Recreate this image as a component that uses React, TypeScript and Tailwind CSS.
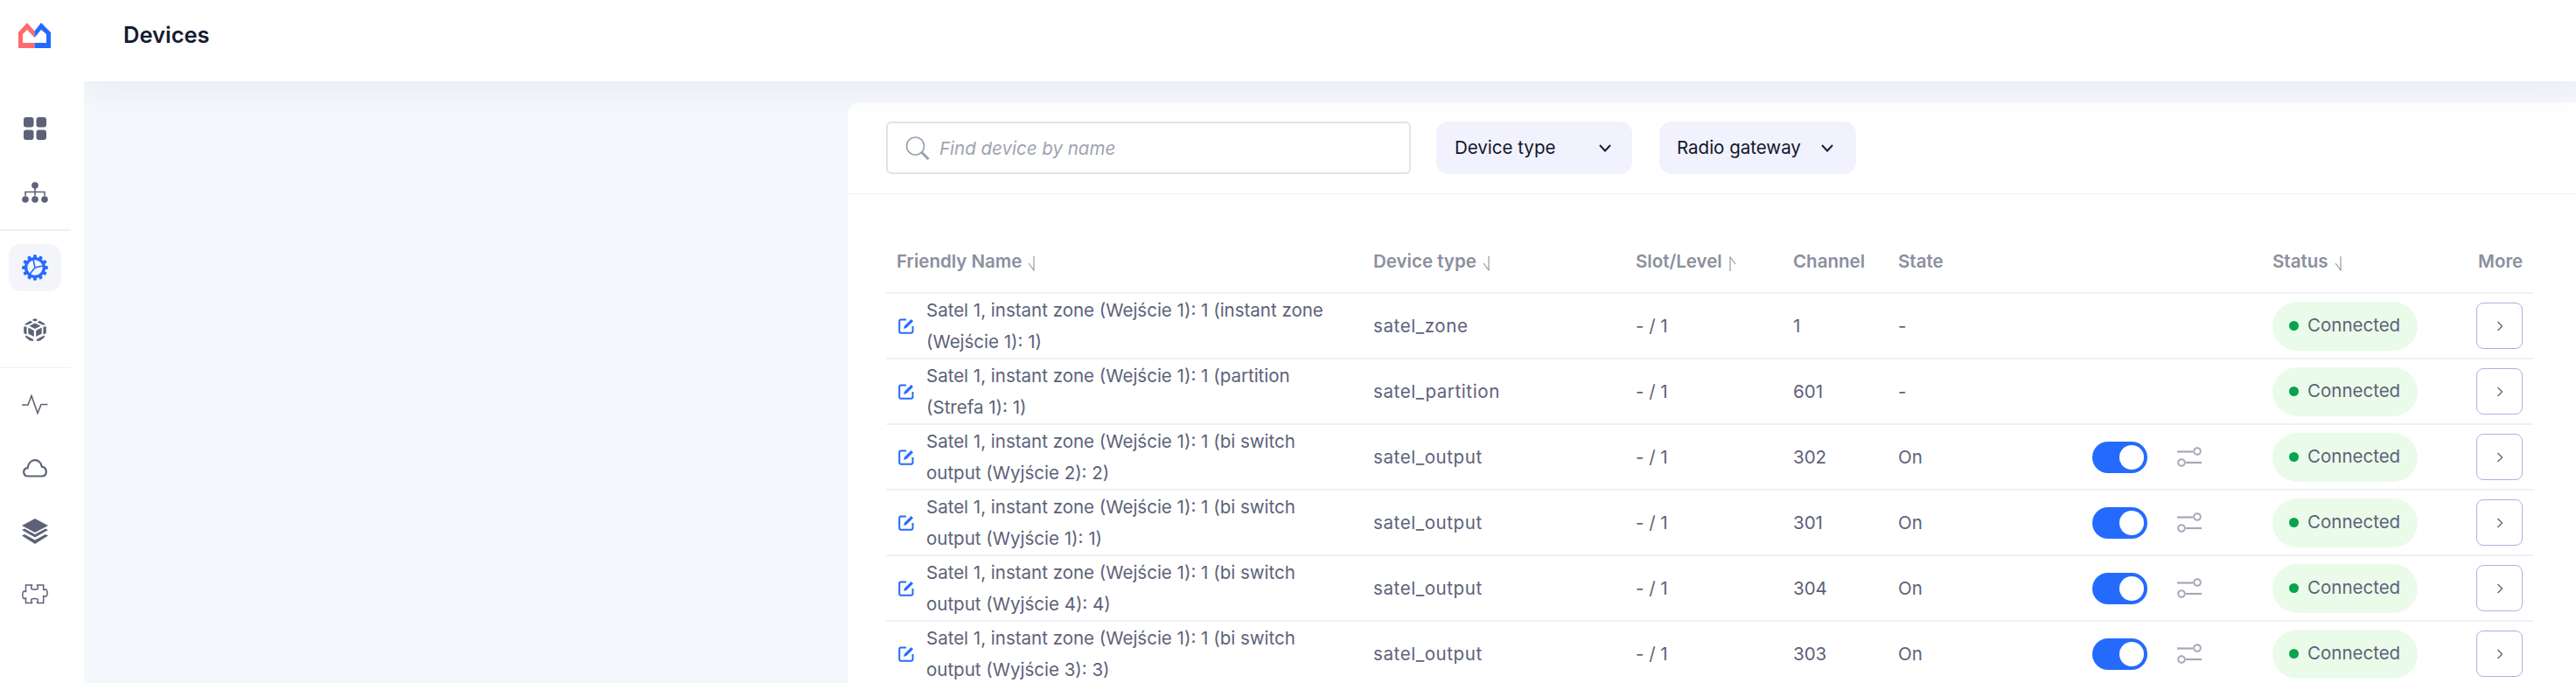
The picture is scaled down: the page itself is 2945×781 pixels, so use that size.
import React from "react";

const ink = "#5d6279";
const rowGrid = "grid grid-cols-[557px_300px_180px_120px_222px_206px_233px_64px] items-center";

function Logo() {
  return (
    <svg width="37" height="29" viewBox="0 0 37 29">
      <path d="M18.5 9.5 L10 0 L0 11 V29 H18.5 V23 H5 V13 L10 8 L18.5 17 Z" fill="#ff6b6b" />
      <path d="M18.5 9.5 L26 0 L37 11 V29 H18.5 V23 H32 V13 L26 8 L18.5 17 Z" fill="#246bfd" />
    </svg>
  );
}
function GridIcon() {
  return (
    <svg width="26" height="26" viewBox="0 0 26 26" fill={ink}>
      <rect x="0" y="0" width="11.5" height="11.5" rx="3" />
      <rect x="14.5" y="0" width="11.5" height="11.5" rx="3" />
      <rect x="0" y="14.5" width="11.5" height="11.5" rx="3" />
      <rect x="14.5" y="14.5" width="11.5" height="11.5" rx="3" />
    </svg>
  );
}
function TreeIcon() {
  return (
    <svg width="30" height="24" viewBox="0 0 30 24" fill={ink}>
      <circle cx="15" cy="4" r="3.8" />
      <circle cx="4" cy="20" r="3.8" />
      <circle cx="15" cy="20" r="3.8" />
      <circle cx="26" cy="20" r="3.8" />
      <path d="M14.2 7h1.6v3.7h11v5h-1.6v-3.4h-9.4v3.4h-1.6v-3.4H4.8v3.4H3.2v-5h11z" />
    </svg>
  );
}
function GearIcon() {
  const teeth = Array.from({ length: 12 }, (_, i) => i * 30);
  return (
    <svg width="30" height="30" viewBox="0 0 30 30">
      {teeth.map((a) => (
        <rect key={a} x="13.1" y="0.2" width="3.8" height="4.5" rx="1" fill="#246bfd" transform={`rotate(${a} 15 15)`} />
      ))}
      <circle cx="15" cy="15" r="10.4" fill="none" stroke="#246bfd" strokeWidth="3.4" />
      <path d="M13 6 L15 15 L24 13 M15 15 L9 22.5" fill="none" stroke="#246bfd" strokeWidth="1.6" />
    </svg>
  );
}
function CubeIcon() {
  return (
    <svg width="28" height="28" viewBox="0 0 28 28" fill={ink}>
      <path d="M14 6.5 L20.5 9.8 L14 13 L7.5 9.8Z" />
      <path d="M10.6 3 L14 1 L17.4 3 L14 4.6Z" />
      <path d="M19.5 3.8 L25.5 7.4 L25.5 8.6 L22.6 8.6 L16.5 5.4Z" />
      <path d="M8.5 3.8 L2.5 7.4 L2.5 8.6 L5.4 8.6 L11.5 5.4Z" />
      <path d="M6.3 11.5 L12.8 14.9 L12.8 22 L6.3 18.6Z" />
      <path d="M21.7 11.5 L15.2 14.9 L15.2 22 L21.7 18.6Z" />
      <path d="M1.2 10.5 L4.5 10.5 L4.5 19.5 L1.2 18Z" />
      <path d="M26.8 10.5 L23.5 10.5 L23.5 19.5 L26.8 18Z" />
      <path d="M3.5 20.6 L12 25 L12 27 L8 26.5 L3 22.5Z" />
      <path d="M24.5 20.6 L16 25 L16 27 L20 26.5 L25 22.5Z" />
    </svg>
  );
}
function PulseIcon() {
  return (
    <svg width="30" height="24" viewBox="0 0 30 24" fill="none" stroke={ink} strokeWidth="1.6" strokeLinejoin="miter">
      <path d="M0 12 H7 L11 1.5 L18 21.5 L22 11.5 H29.5" />
    </svg>
  );
}
function CloudIcon() {
  return (
    <svg width="28" height="21" viewBox="0 0 28 21" fill="none" stroke={ink} strokeWidth="2.2">
      <path d="M6 19.5 C3 19.5 1.2 17.5 1.2 14.8 C1.2 12.2 3 10.4 5.6 10.2 C6.4 5 9.6 1.2 14 1.2 C18 1.2 21 4.4 21.8 8.6 C24.8 9 26.8 11.4 26.8 14.6 C26.8 17.5 25 19.5 22 19.5 Z" />
    </svg>
  );
}
function LayersIcon() {
  return (
    <svg width="30" height="29" viewBox="0 0 30 29" fill={ink}>
      <path d="M15 0 L30 8 L15 16 L0 8Z" />
      <path d="M0 13 L3 11.5 L15 18 L27 11.5 L30 13 L15 21.5Z" />
      <path d="M0 19.5 L3 18 L15 24.5 L27 18 L30 19.5 L15 29Z" />
    </svg>
  );
}
function PuzzleIcon() {
  return (
    <svg width="30" height="23" viewBox="0 0 30 23" fill="none" stroke={ink} strokeWidth="1.5">
      <path d="M4.5 1 H11.5 C11.5 2.5 10.5 3 10.5 4.2 C10.5 6.6 18.5 6.6 18.5 4.2 C18.5 3 17.5 2.5 17.5 1 H24.7 V6.5 C25.5 6.5 26 6 27 6 C29.8 6 29.8 14 27 14 C26 14 25.5 13.5 24.7 13.5 V21.5 H17.5 C17.5 20 18.5 19.5 18.5 18.3 C18.5 15.9 10.5 15.9 10.5 18.3 C10.5 19.5 11.5 20 11.5 21.5 H4.5 V16 C3.7 16 3.5 16.5 2.8 16.5 C0.2 16.5 0.2 8 2.8 8 C3.5 8 3.7 8.5 4.5 8.5Z" />
    </svg>
  );
}
function EditIcon() {
  return (
    <svg width="19" height="19" viewBox="0 0 19 19" fill="none" stroke="#246bfd" strokeWidth="2">
      <path d="M9 2.5 H3 A1.8 1.8 0 0 0 1.2 4.3 V16 A1.8 1.8 0 0 0 3 17.8 H14.7 A1.8 1.8 0 0 0 16.5 16 V10" />
      <path d="M6 13 L7 9.8 L14.8 2 L17 4.2 L9.2 12 Z" fill="#246bfd" stroke="none" />
    </svg>
  );
}
function SearchIcon() {
  return (
    <svg width="28" height="27" viewBox="0 0 28 27" fill="none" stroke="#9aa1b3">
      <circle cx="11.5" cy="11" r="10" strokeWidth="1.6" />
      <path d="M19 18.5 L26.5 26" strokeWidth="3" />
    </svg>
  );
}
function Chevron() {
  return (
    <svg width="14" height="9" viewBox="0 0 14 9" fill="none" stroke="#1b1f33" strokeWidth="2">
      <path d="M1 1 L7 7.5 L13 1" />
    </svg>
  );
}
function Sliders() {
  return (
    <svg width="28" height="23" viewBox="0 0 28 23" fill="none" stroke="#a5a8b8" strokeWidth="2">
      <path d="M0 5.5 H18" strokeWidth="2.2" />
      <circle cx="23" cy="5" r="3.8" />
      <circle cx="5" cy="18" r="3.8" />
      <path d="M10 18 H28" strokeWidth="2.2" />
    </svg>
  );
}
function SortArrow({ up }: { up?: boolean }) {
  return (
    <svg width="9" height="17" viewBox="0 0 9 17" fill="none" stroke="#8f92a1" strokeWidth="1.1" className="ml-[7px] mt-1">
      {up ? <path d="M2 17 V1 L8 9" /> : <path d="M7 0 V16 L1 8" />}
    </svg>
  );
}
function NavItem({ children, active }: { children: React.ReactNode; active?: boolean }) {
  return (
    <div className={`flex h-[54px] w-[60px] items-center justify-center rounded-[14px] ${active ? "bg-[#f3f5fb]" : ""}`}>
      {children}
    </div>
  );
}
function HeadCell({ label, sort, up }: { label: string; sort?: boolean; up?: boolean }) {
  return (
    <div className="flex items-center text-[20.5px] font-semibold text-[#8b8f9e]">
      {label}
      {sort ? <SortArrow up={up} /> : null}
    </div>
  );
}

const rows = [
  { name: ["Satel 1, instant zone (Wejście 1): 1 (instant zone", "(Wejście 1): 1)"], type: "satel_zone", channel: "1", state: "-", toggle: false },
  { name: ["Satel 1, instant zone (Wejście 1): 1 (partition", "(Strefa 1): 1)"], type: "satel_partition", channel: "601", state: "-", toggle: false },
  { name: ["Satel 1, instant zone (Wejście 1): 1 (bi switch", "output (Wyjście 2): 2)"], type: "satel_output", channel: "302", state: "On", toggle: true },
  { name: ["Satel 1, instant zone (Wejście 1): 1 (bi switch", "output (Wyjście 1): 1)"], type: "satel_output", channel: "301", state: "On", toggle: true },
  { name: ["Satel 1, instant zone (Wejście 1): 1 (bi switch", "output (Wyjście 4): 4)"], type: "satel_output", channel: "304", state: "On", toggle: true },
  { name: ["Satel 1, instant zone (Wejście 1): 1 (bi switch", "output (Wyjście 3): 3)"], type: "satel_output", channel: "303", state: "On", toggle: true },
];

export default function App() {
  return (
    <div
      className="flex h-[781px] w-[2945px] overflow-hidden bg-white"
      style={{ fontFamily: "Inter, 'Noto Sans', sans-serif" }}
    >
      <aside className="relative z-20 flex h-full w-[96px] shrink-0 flex-col bg-white">
        <div className="flex h-[80px] items-center justify-center pr-[17px]"><Logo /></div>
        <div className="flex flex-col items-center pr-[17px]">
          <div className="mt-[40px] flex h-[54px] items-center"><GridIcon /></div>
          <div className="mt-[19px] flex h-[54px] items-center"><TreeIcon /></div>
        </div>
        <div className="mt-[15px] h-[2px] w-[81px] bg-[#eff1f4]" />
        <div className="flex flex-col items-center pr-[17px]">
          <div className="mt-[15px]"><NavItem active><GearIcon /></NavItem></div>
          <div className="mt-[17px]"><NavItem><CubeIcon /></NavItem></div>
        </div>
        <div className="mt-[16px] h-px w-[81px] bg-[#eff1f4]" />
        <div className="flex flex-col items-center gap-[18px] pr-[17px]">
          <div className="mt-[15px]"><NavItem><PulseIcon /></NavItem></div>
          <NavItem><CloudIcon /></NavItem>
          <NavItem><LayersIcon /></NavItem>
          <NavItem><PuzzleIcon /></NavItem>
        </div>
      </aside>

      <div className="flex min-w-0 flex-1 flex-col">
        <header className="relative z-10 flex h-[93px] shrink-0 items-start bg-white pl-[45px] pt-[24px] text-[25.5px] font-semibold leading-[32px] text-[#151b33] shadow-[0_6px_40px_rgba(40,50,80,0.07)]">
          Devices
        </header>
        <main className="flex-1 bg-[#f4f7fb] pl-[873px] pt-[24px]">
          <div className="h-full rounded-tl-[14px] bg-white">
            <div className="flex h-[105px] items-start gap-[29px] border-b border-[#f0f1f4] pl-[44px] pt-[22px]">
              <div className="flex h-[60px] w-[600px] items-center gap-[11px] rounded-[6px] border-2 border-[#e1e4ea] pl-[20px]">
                <SearchIcon />
                <span className="pt-[2px] text-[20.5px] italic text-[#9ea3b2]">Find device by name</span>
              </div>
              <div className="flex items-center gap-[31px]">
                <div className="flex h-[60px] w-[224px] items-center justify-between rounded-[14px] bg-[#f1f2fd] pl-[21px] pr-[24px] text-[20.5px] text-[#12162b]">
                  Device type <Chevron />
                </div>
                <div className="flex h-[60px] w-[225px] items-center justify-between rounded-[14px] bg-[#f1f2fd] pl-[20px] pr-[26px] text-[20.5px] text-[#12162b]">
                  Radio gateway <Chevron />
                </div>
              </div>
            </div>

            <div className="ml-[44px] mr-[49px]">
              <div className={`${rowGrid} h-[114px] border-b-2 border-[#eff1f4] pt-[42px]`}>
                <div className="pl-[12px]"><HeadCell label="Friendly Name" sort /></div>
                <HeadCell label="Device type" sort />
                <HeadCell label="Slot/Level" sort up />
                <HeadCell label="Channel" />
                <HeadCell label="State" />
                <div />
                <HeadCell label="Status" sort />
                <div className="pl-[2px]"><HeadCell label="More" /></div>
              </div>
              {rows.map((r, i) => (
                <div key={i} className={`${rowGrid} h-[75px] border-b-2 border-[#eff1f4] text-[20.5px]`} style={{ color: ink }}>
                  <div className="flex items-center gap-[13px] pl-[14px]">
                    <EditIcon />
                    <div className="leading-[36px] whitespace-nowrap">
                      <div>{r.name[0]}</div>
                      <div>{r.name[1]}</div>
                    </div>
                  </div>
                  <div className="pt-[2px] tracking-[0.6px]">{r.type}</div>
                  <div className="pt-[2px]">- / 1</div>
                  <div className="pt-[2px]">{r.channel}</div>
                  <div className="pt-[2px]">{r.state}</div>
                  <div className="flex items-center gap-[34px]">
                    {r.toggle ? (
                      <>
                        <div className="flex h-[36px] w-[63px] items-center justify-end rounded-full bg-[#246bfd] pr-[4px]">
                          <div className="h-[28px] w-[28px] rounded-full bg-white" />
                        </div>
                        <Sliders />
                      </>
                    ) : null}
                  </div>
                  <div>
                    <div className="flex h-[56px] w-[166px] items-center gap-[10px] rounded-full bg-[#ebfbe9] pl-[19px]">
                      <div className="h-[11px] w-[11px] rounded-full bg-[#06a44f]" />
                      Connected
                    </div>
                  </div>
                  <div>
                    <div className="flex h-[53px] w-[53px] items-center justify-center rounded-[8px] border border-[#a9b2e3]">
                      <svg width="8" height="12" viewBox="0 0 8 12" fill="none" stroke="#5d6279" strokeWidth="1.3">
                        <path d="M1.5 1 L6.5 6 L1.5 11" />
                      </svg>
                    </div>
                  </div>
                </div>
              ))}
            </div>
          </div>
        </main>
      </div>
    </div>
  );
}
